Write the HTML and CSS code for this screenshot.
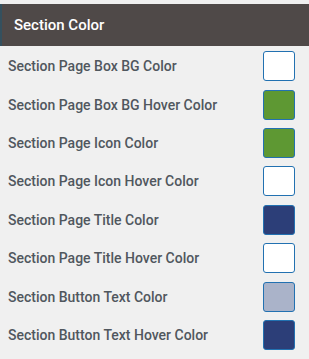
FILE: index.html
```
<!DOCTYPE html>
<html>
<head>
<meta charset="utf-8">
<link rel="stylesheet" href="styles.css">
</head>
<body>
<div class="panel">
  <div class="header">Section Color</div>
  <div class="rows">
    <div class="row"><span class="label">Section Page Box BG Color</span><span class="swatch white"></span></div>
    <div class="row"><span class="label">Section Page Box BG Hover Color</span><span class="swatch green"></span></div>
    <div class="row"><span class="label">Section Page Icon Color</span><span class="swatch green"></span></div>
    <div class="row"><span class="label">Section Page Icon Hover Color</span><span class="swatch white"></span></div>
    <div class="row"><span class="label">Section Page Title Color</span><span class="swatch navy"></span></div>
    <div class="row"><span class="label">Section Page Title Hover Color</span><span class="swatch white"></span></div>
    <div class="row"><span class="label">Section Button Text Color</span><span class="swatch light"></span></div>
    <div class="row"><span class="label">Section Button Text Hover Color</span><span class="swatch navy"></span></div>
  </div>
</div>
</body>
</html>
```
FILE: styles.css
```
html, body {
  margin: 0;
  padding: 0;
  background: #f0f0f0;
}
body {
  font-family: Roboto, "Noto Sans", sans-serif;
  width: 309px;
  height: 359px;
  overflow: hidden;
}
.panel {
  padding-top: 4px;
}
.header {
  background: #4f4948;
  border-left: 2px solid #34505e;
  color: #ffffff;
  font-size: 15px;
  font-weight: 500;
  height: 42px;
  line-height: 42px;
  padding-left: 12px;
}
.rows {
  display: flex;
  flex-direction: column;
  padding-top: 1px;
}
.row {
  display: flex;
  align-items: center;
  justify-content: space-between;
  height: 38.43px;
  padding-left: 8px;
  padding-right: 14px;
}
.label {
  color: #50575e;
  font-size: 14px;
  font-weight: 500;
}
.swatch {
  width: 30px;
  height: 28px;
  border: 1px solid #2271b1;
  border-radius: 3px;
  box-sizing: content-box;
}
.white { background: #ffffff; }
.green { background: #5e9833; }
.navy { background: #2c3e78; }
.light { background: #aab3c9; }
```
